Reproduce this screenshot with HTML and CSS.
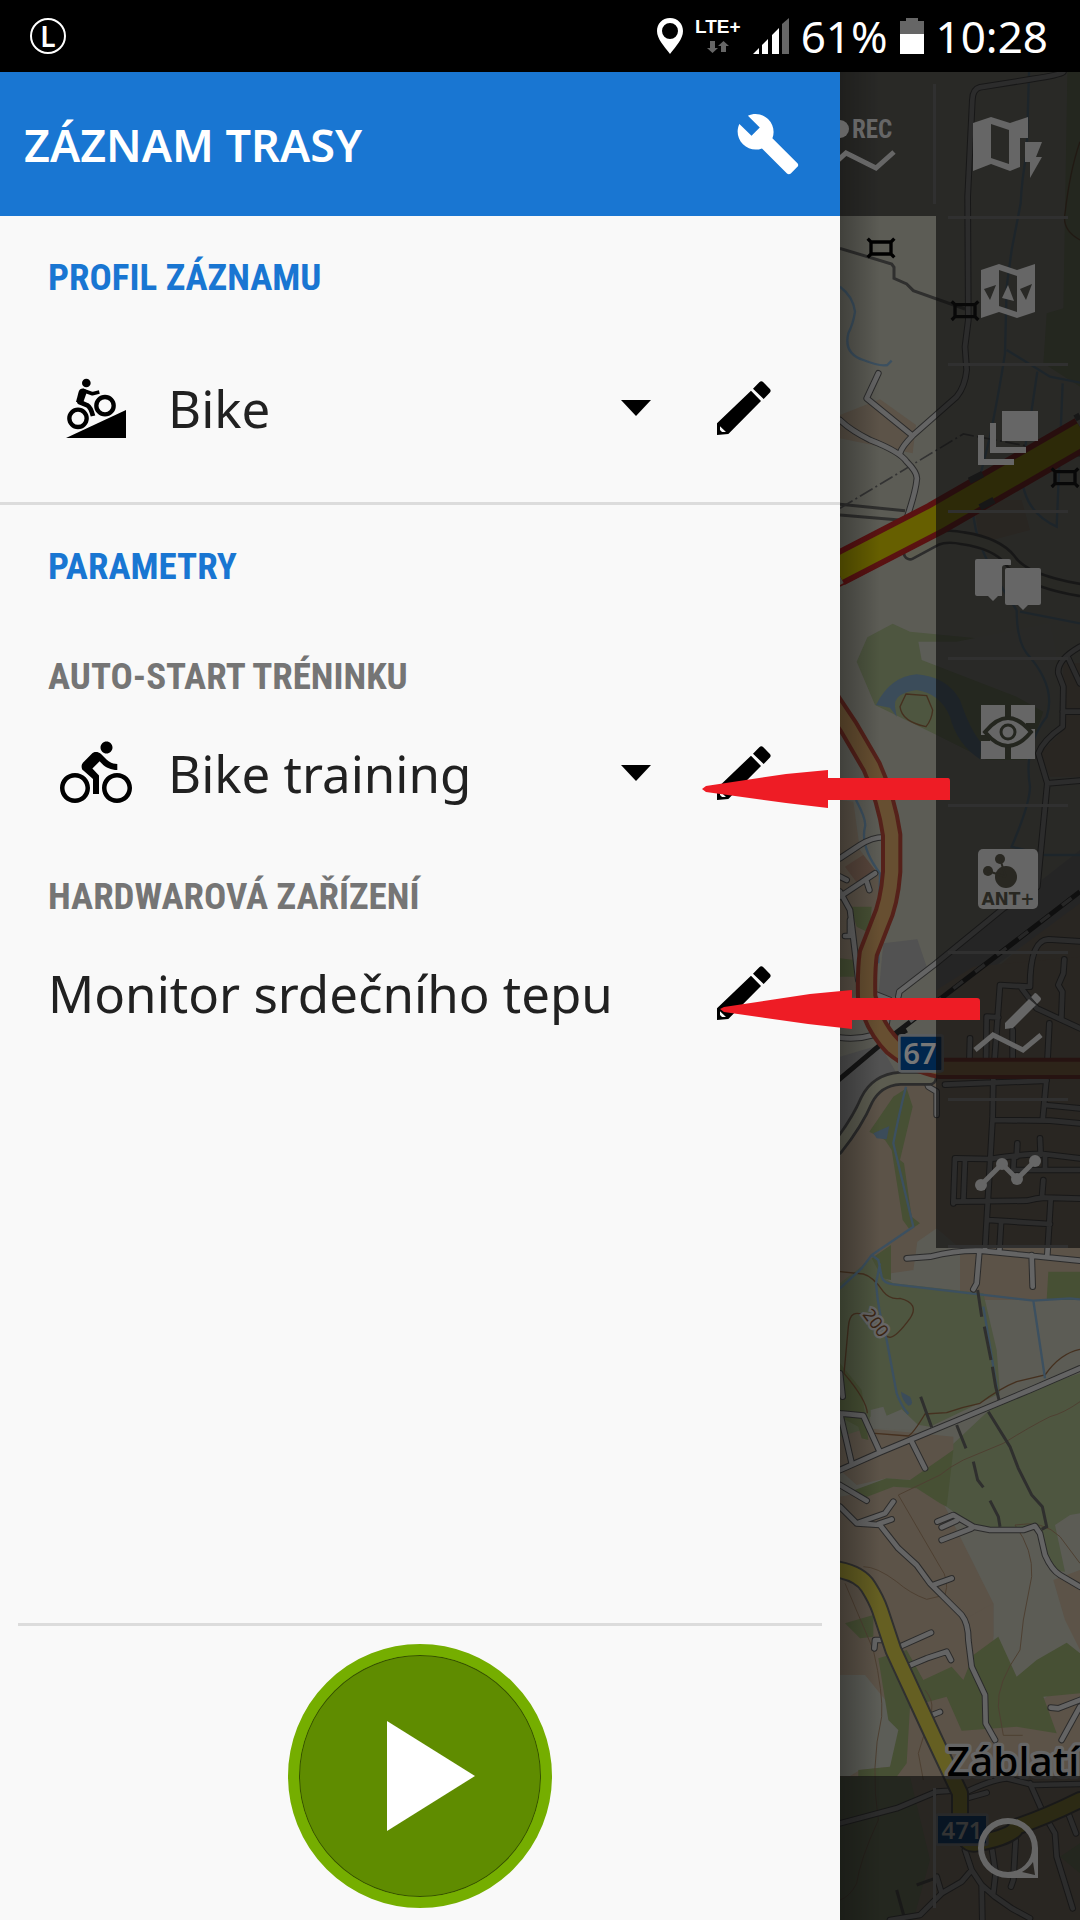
FILE: index.html
```
<!DOCTYPE html>
<html lang="cs">
<head>
    <meta charset="UTF-8">
    <meta name="viewport" content="width=device-width, initial-scale=1">
    <title>Záznam trasy</title>
    <link rel="stylesheet" href="styles.css">
</head>
<body>

<svg class="defs" aria-hidden="true">
    <symbol id="pencil" viewBox="348 60 288 288">
        <path fill-rule="evenodd" d="M513 152L543 183L445 282L411 285V250ZM420 259V270L426 276H438Z"/>
        <path d="M519 146L538 127Q544 121 550 127L569 146Q575 152 569 158L551 177Z"/>
    </symbol>
    <symbol id="caret" viewBox="0 0 30 16"><path d="M0 0H30L15 16Z"/></symbol>
</svg>

<div class="screen">
    <header class="status-bar">
        <span class="status-app">L</span>
        <svg class="pin" viewBox="0 0 26 36"><path fill-rule="evenodd" d="M13 0C5 0 0 6 0 13C0 21 7 28 13 36C19 28 26 21 26 13C26 6 21 0 13 0ZM13 5A8 8 0 1 1 13 21A8 8 0 1 1 13 5Z"/></svg>
        <span class="network">
            <span>LTE+</span>
            <svg viewBox="0 0 22 14"><path d="M3 1H8V8H11L5.500 13L0 8H3ZM14 12H19V6H22L16.500 1L11 6H14Z"/></svg>
        </span>
        <svg class="signal" viewBox="0 0 36 36">
            <path fill="#fff" d="M0 36L6 30V36ZM9 36V27L15 21V36ZM19 36V17L26 10V36Z"/>
            <path fill="#666" d="M29 36V6L36 0V36Z"/>
        </svg>
        <span class="status-text">61%</span>
        <svg class="battery" viewBox="0 0 24 36">
            <path fill="#666" d="M6 0H18V3H24V16H0V3H6Z"/>
            <path fill="#fff" d="M0 16H24V36H0Z"/>
        </svg>
        <span class="status-text">10:28</span>
    </header>

    <div class="main">
        <section class="drawer">
            <div class="drawer-header">
                <h1>ZÁZNAM TRASY</h1>
                <button class="icon-button" aria-label="Nastavení">
                    <svg class="wrench" viewBox="0 0 24 24"><path d="M22.700 19l-9.100-9.100c.9-2.300.4-5-1.500-6.900-2-2-5-2.400-7.400-1.300L9 6 6 9 1.600 4.700C.4 7.100.9 10.100 2.900 12.100c1.900 1.900 4.600 2.400 6.900 1.500l9.100 9.100c.4.4 1 .4 1.400 0l2.300-2.300c.5-.4.5-1.100.1-1.400z"/></svg>
                </button>
            </div>

            <div class="section profile">
                <h2 class="section-title">PROFIL ZÁZNAMU</h2>
                <div class="row">
                    <svg class="row-icon" viewBox="144 420 288 288">
                        <circle cx="259" cy="489" r="13"/>
                        <g fill="none" stroke="#000">
                            <circle cx="234" cy="595" r="26" stroke-width="13"/>
                            <circle cx="315" cy="557" r="26" stroke-width="13"/>
                            <path d="M249 516L238 546L262 556Q272 562 279 588" stroke-width="14" stroke-linejoin="round"/>
                            <path d="M248 511L277 521L298 516" stroke-width="11" stroke-linejoin="round"/>
                        </g>
                        <path d="M236 515Q240 504 252 506L262 512L250 546H228Z"/>
                        <path d="M198 654L378 570V654Z"/>
                    </svg>
                    <div class="picker">
                        <select aria-label="Profil záznamu"><option>Bike</option></select>
                        <svg class="caret"><use href="#caret"/></svg>
                    </div>
                    <button class="icon-button" aria-label="Upravit profil"><svg><use href="#pencil"/></svg></button>
                </div>
            </div>

            <div class="section params">
                <h2 class="section-title">PARAMETRY</h2>
                <h3 class="param-title">AUTO-START TRÉNINKU</h3>
                <div class="row">
                    <svg class="row-icon" viewBox="-4 -4 32 32"><path d="M15.500 5.500c1.100 0 2-.9 2-2s-.9-2-2-2-2 .9-2 2 .9 2 2 2zM5 12c-2.800 0-5 2.200-5 5s2.200 5 5 5 5-2.200 5-5-2.200-5-5-5zm0 8.500c-1.900 0-3.500-1.600-3.500-3.500s1.600-3.500 3.500-3.500 3.500 1.600 3.500 3.500-1.600 3.500-3.500 3.500zm5.800-10l2.400-2.400.8.8c1.300 1.300 3 2.100 5.100 2.100V9c-1.500 0-2.700-.6-3.600-1.500l-1.900-1.900c-.5-.4-1-.6-1.600-.6s-1.100.2-1.400.6L7.800 8.400c-.4.4-.6.9-.6 1.400 0 .6.2 1.100.6 1.400L11 14v5h2v-6.200l-2.200-2.300zM19 12c-2.800 0-5 2.200-5 5s2.200 5 5 5 5-2.200 5-5-2.200-5-5-5zm0 8.500c-1.900 0-3.500-1.600-3.500-3.500s1.600-3.500 3.500-3.500 3.500 1.600 3.500 3.500-1.600 3.500-3.500 3.500z"/></svg>
                    <div class="picker">
                        <select aria-label="Auto-start tréninku"><option>Bike training</option></select>
                        <svg class="caret"><use href="#caret"/></svg>
                    </div>
                    <button class="icon-button" aria-label="Upravit trénink"><svg><use href="#pencil"/></svg></button>
                    <svg class="arrow arrow-training" viewBox="0 0 248 38"><path d="M0 19L4 16L84 4L126 0V8H246Q248 8 248 11V30H126V38L84 33L4 22Z"/></svg>
                </div>
                <h3 class="param-title">HARDWAROVÁ ZAŘÍZENÍ</h3>
                <div class="row">
                    <span class="row-text">Monitor srdečního tepu</span>
                    <button class="icon-button" aria-label="Upravit monitor tepu"><svg><use href="#pencil"/></svg></button>
                    <svg class="arrow arrow-monitor" viewBox="0 0 260 39"><path d="M0 19L4 17L90 4L132 0V8H257Q260 8 260 11V30H132V39L88 34L4 22Z"/></svg>
                </div>
            </div>

            <div class="start">
                <button class="play" aria-label="Spustit záznam">
                    <svg viewBox="0 0 88 110"><path d="M0 0L88 55L0 110Z"/></svg>
                </button>
            </div>
        </section>

        <aside class="map-side">
            <!-- map, three units per pixel -->
            <svg class="map" viewBox="30 6 720 5544" preserveAspectRatio="xMinYMin slice">
                <defs>
                    <symbol id="bunker" viewBox="0 0 84 64" overflow="visible">
                        <path d="M12 14H72V50H12ZM2 4L12 14M82 4L72 14M2 60L12 50M82 60L72 50" fill="none" stroke="#000" stroke-width="10"/>
                    </symbol>
                    <g id="streets">
                        <path d="M700 6Q690 15 600 28L450 52Q428 58 427 90L413 380L415 750L405 830L410 900Q405 950 380 980L250 1095Q215 1130 210 1150M145 910L110 985L245 1095M30 1050Q60 1080 120 1110Q210 1145 230 1175Q265 1210 260 1230Q258 1260 232 1340"/>
                        <path transform="translate(0 1380)" d="M30 985L90 945Q130 920 165 922M30 1100L135 1030M108 1048L118 1080M30 1085L60 1140L85 1350M45 1218H60V1170M30 1040L50 1050M205 1400L208 1385L318 1300L520 1135L622 1070L652 760L625 670Q640 630 698 590L700 470L685 430Q680 390 750 350M652 760L750 752M715 385L750 460M698 545H750"/>
                        <path transform="translate(0 2580)" d="M30 323Q80 330 130 315M130 190L180 210L170 280M230 985L300 980Q380 960 450 962L750 992M448 965L440 1060L430 1078M605 975L608 1070M345 464L490 458L650 452M490 440L488 560L465 960M658 280L650 440L638 570M488 570L660 572L750 580M645 525L750 535M370 820L375 685L480 687Q600 670 640 672L750 685M405 690L400 815M370 815L590 812Q620 805 645 803L750 806M475 870L660 882M513 880L508 965M662 810L652 975M630 625L632 675M562 640L560 680M552 680L550 720L750 720M645 680V715M640 750L636 800M420 325L418 400M600 170Q600 30 655 28L750 34M703 88L700 130L685 165L697 185L694 265M595 170L510 165L490 440M468 400L470 260L505 262M575 175L620 235L750 295M548 300V400M280 430L295 470L320 485V555"/>
                        <path transform="translate(0 3540)" d="M30 660L150 607L600 420L750 355M30 490L100 497L150 607M30 370L38 440M30 490L65 640M245 575L285 655M30 705L110 752M30 770L80 820L150 825L205 895L260 945L300 1000L350 1050L395 1095Q415 1120 415 1170L425 1250L465 1335L467 1420L495 1470M80 820L165 790L190 755M145 822L185 808M310 1005L365 985M322 815L370 795L430 830L480 840H580L615 828L630 850L645 915Q665 960 690 975L750 1010M335 832L380 812M335 870L425 835"/>
                        <path transform="translate(0 4470)" d="M205 262L303 218M235 318L290 295L350 275L363 300M133 265L135 240H170M295 470L330 456M662 443L685 445L750 420M695 540L750 440M30 790L200 745L320 695L400 690M400 700Q480 660 530 655L610 675L750 672M600 670L640 760L675 820L680 890L728 1045M410 715L470 698M405 870L425 930L455 975L495 1010L545 1045L600 1075M425 930L395 965L335 1000L270 1065L180 1080M320 950L335 1000M455 975L457 1080M485 860L497 940L490 1000M557 840L550 960L543 980M715 760L738 820"/>
                    </g>
                    <g id="trunk">
                        <path transform="translate(0 1380)" d="M5 515L55 590L125 710Q170 810 185 915V1025Q178 1120 150 1180L115 1270Q108 1320 110 1400Q130 1490 190 1550Q250 1600 330 1615H750"/>
                    </g>
                    <g id="secondary">
                        <path transform="translate(0 4470)" d="M20 28Q90 40 115 80Q140 120 150 150L190 270L310 530L390 700V770Q395 860 440 850Q550 830 560 800Q650 770 750 720"/>
                    </g>
                    <g id="lanes">
                        <path transform="translate(0 1380)" d="M240 70L318 28Q350 14 400 25Q500 40 540 90Q580 150 750 180"/>
                        <path transform="translate(0 2580)" d="M20 655Q80 580 110 510Q140 450 210 445H300"/>
                    </g>
                    <linearGradient id="shade"><stop offset="0" stop-color="#000" stop-opacity=".3"/><stop offset="1" stop-color="#000" stop-opacity="0"/></linearGradient>
                </defs>

                <rect x="30" y="6" width="720" height="5544" fill="#5c5c55"/>

                <!-- land -->
                <g class="meadow">
                    <path d="M712 6H750V950L640 880L650 730L700 715Z"/>
                    <path transform="translate(0 1380)" d="M80 395L112 322L188 281L240 305L495 330L640 545L590 690H470L320 615L135 525Z"/>
                </g>
                <path class="built" d="M30 1035L150 988L258 1065L248 1150L30 1105ZM430 1290H575L600 1380L450 1420Z"/>
                <g transform="translate(0 1380)">
                    <path class="open" d="M265 335H380L660 280L680 380L640 545L560 500L275 390Z"/>
                    <path class="built" d="M30 810L70 815L90 960L150 1040L120 1400H30ZM700 400H750V740H660L630 670L700 600ZM400 1400L750 1100V1400Z"/>
                    <path class="house" d="M45 1010L100 975L135 1020L90 1070Z"/>
                    <path class="wood" d="M60 1130H125L120 1210L80 1190ZM30 1285L72 1290V1340H30Z"/>
                    <path class="industry" d="M160 1240L262 1228L290 1310L200 1400H145ZM318 1300L750 960V1120L318 1440Z"/>
                    <path class="water" d="M138 525Q180 440 260 433Q350 440 390 510Q420 600 455 640L450 688Q380 640 360 560Q330 490 260 480Q190 490 195 530L200 560L180 533Z"/>
                </g>
                <g transform="translate(0 2580)">
                    <path class="built" d="M30 680L160 440H320V180L430 110L750 80V1110H390V955L320 895L262 935L250 1020L183 1030V945L30 1100Z"/>
                    <path class="industry" d="M30 380L150 345L200 430L110 480L30 610Z"/>
                    <path class="wood" d="M190 500L230 475L248 530L210 690L222 700L245 860L270 880L240 900L218 870L185 660L165 630L118 605ZM125 985L183 945V1050L125 1040ZM655 1025H750V1110H650Z"/>
                    <path class="water" d="M130 610L178 588L170 628L140 625Z"/>
                    <path class="meadow" d="M30 1060L125 985L155 1040L190 1060L460 1090L500 1260L510 1390L300 1490L120 1460L110 1530L30 1560Z"/>
                </g>
                <g transform="translate(0 3540)">
                    <path class="meadow" d="M350 600L510 450L750 370V790L720 795L675 825L705 965L660 960L620 840L430 830L350 770Z"/>
                    <path class="built" d="M110 535L370 560V600L250 690L170 685L80 705L30 660V560ZM30 740L190 710L260 715L340 760L490 1060V1160L30 1160ZM670 990L750 960V1200L705 1110Z"/>
                    <path class="wood" d="M30 340L95 420L115 570L95 565L85 530L30 500ZM240 690L370 600L350 770L330 760L260 715L190 710L100 745L60 725L170 685Z"/>
                    <path class="open" d="M122 480L160 470L170 497L215 478L280 540L122 535Z"/>
                </g>
                <g transform="translate(0 4470)">
                    <path class="built" d="M30 180H400L490 130V350L630 425L690 380L750 280V1080H30Z"/>
                    <path class="open" d="M30 345H105L215 480L205 560L180 620L90 630L60 648H30Z"/>
                    <path class="wood" d="M45 190L130 165V230L90 235ZM145 295L230 270L280 360L365 320L400 360L430 285L505 230L560 350L620 300L710 248L750 280V400L640 410L680 520L560 500L395 512L350 410L240 440L230 610L200 650H85V630L180 620L205 510L175 480Z"/>
                    <path class="meadow" d="M30 650H240L300 900L250 1080H30ZM690 890L750 850V940Z"/>
                </g>

                <!-- contour lines -->
                <g class="contour">
                    <path d="M750 215Q720 300 705 430Q695 480 750 510"/>
                    <path transform="translate(0 1380)" d="M228 492L290 497L308 540Q305 570 288 590Q215 575 210 530Z"/>
                    <path transform="translate(0 3540)" d="M30 65L100 72Q130 80 160 125Q180 150 210 145Q270 160 240 205Q200 260 180 262L165 258M110 200Q60 170 55 230L42 370Q110 450 112 490M135 550L235 558Q250 550 285 492L350 488Q400 470 450 460Q510 415 560 395L645 375Q690 310 750 298"/>
                </g>
                <g class="contour faint">
                    <path transform="translate(0 3540)" d="M750 455Q700 490 660 500Q600 530 520 580L400 630Q360 650 330 675L205 735L330 950Q360 990 345 1035L290 1048Q240 1030 200 995Q140 950 100 950M750 940L690 860Q640 810 555 825Q610 900 605 980L580 1110L570 1200Q500 1300 505 1370L520 1456H578"/>
                    <path transform="translate(0 4470)" d="M45 70L130 270Q160 400 155 470Q120 620 145 780Q90 900 80 970Q60 1010 30 1020M285 390Q310 420 305 450L265 580L280 660"/>
                </g>

                <!-- water courses -->
                <g class="stream">
                    <path d="M597 6L590 250Q575 330 572 400L545 540L530 650L525 850Q510 950 480 1100L430 1300Q420 1420 560 1620M530 840L660 920L750 938M622 905L605 1020L575 1190Q570 1320 680 1370L698 940"/>
                    <path d="M30 650Q70 680 75 725Q70 760 55 790Q40 850 100 870Q150 890 172 885L185 872"/>
                    <path transform="translate(0 1380)" d="M560 240Q560 330 590 370Q680 470 650 560Q580 650 600 770Q600 820 545 950L640 975H750M570 245L750 280M78 810Q110 870 105 890Q90 950 150 1030L145 1300"/>
                    <path transform="translate(0 2580)" d="M228 470Q205 560 190 640L250 890L125 975L95 1015L30 1075M125 975L145 990L155 1040Q160 1060 190 1063L610 1112L720 1105L750 1108M610 1112L645 1345M150 1000L138 1060Q145 1150 170 1230L200 1390Q215 1430 235 1452M460 1130L505 1400"/>
                </g>
                <path class="water" transform="translate(0 3540)" d="M213 425L240 440Q255 465 235 467Q215 450 213 425Z"/>

                <!-- tracks -->
                <g class="track">
                    <path d="M30 535L185 582L192 592V625L230 642L250 662L405 717"/>
                    <path d="M30 1303L225 1322M30 1335L235 1352"/>
                    <path transform="translate(0 3540)" d="M443 120L455 200M463 230L483 330M487 350L497 410L507 450M272 440L305 532M380 525L408 595M430 635L443 690L460 712M480 752L505 800L510 830M475 485L540 590L565 655L605 735L637 770L650 830L635 838"/>
                    <path transform="translate(0 4470)" d="M260 975L315 955M200 990L225 1080"/>
                </g>
                <path class="power" d="M30 1315L400 1092L750 1158"/>

                <!-- roads -->
                <use href="#streets" class="street-case"/>
                <use href="#streets" class="street"/>
                <use href="#lanes" class="lane-case"/>
                <use href="#lanes" class="lane"/>
                <g transform="translate(0 2580)">
                    <path class="rail" d="M20 455L150 345L230 300M190 315L750 -115"/>
                    <path class="rail-dash" d="M240 275L750 -115"/>
                </g>
                <use href="#trunk" class="trunk-case"/>
                <use href="#trunk" class="trunk"/>
                <use href="#secondary" class="secondary-case"/>
                <use href="#secondary" class="secondary"/>
                <path class="motorway-case" d="M20 1499L318 1345L760 1090"/>
                <path class="motorway" d="M20 1499L318 1345L760 1090"/>
                <path class="motorway-edge" d="M30 1548L318 1397L400 1350"/>
                <path class="bridge" d="M418 1232L458 1212M450 1312L492 1290M735 1045L750 1037"/>

                <use href="#bunker" x="111" y="502" width="84" height="64"/>
                <use href="#bunker" x="363" y="690" width="84" height="64"/>
                <use href="#bunker" x="663" y="1191" width="84" height="64"/>

                <!-- signs and names -->
                <g class="sign">
                    <rect x="208" y="2896" width="130" height="108" rx="6"/>
                    <text x="270" y="2982" font-size="88">67</text>
                    <rect x="320" y="5234" width="152" height="90" rx="4"/>
                    <text x="396" y="5306" font-size="72">471</text>
                </g>
                <text class="height-label" transform="translate(138 3758) rotate(53)" y="19">200</text>
                <text class="town" x="350" y="5118">Záblatí</text>

                <rect x="30" y="6" width="120" height="5544" fill="url(#shade)"/>
            </svg>

            <div class="toolbars">
                <div class="top-tools">
                    <div class="record">
                        <button class="tool" aria-label="REC">
                            <svg viewBox="0 0 96 96">
                                <circle cx="0" cy="33" r="9"/>
                                <text x="12" y="42" class="rec">REC</text>
                                <path class="line" d="M-12 73L6 57L36 72L54 56"/>
                            </svg>
                        </button>
                    </div>
                    <nav class="tools">
                        <button class="tool" aria-label="Rychlá změna mapy">
                            <svg viewBox="0 0 96 96"><path fill-rule="evenodd" d="M13 27L31 21L50 27L68 21V42H60V71L50 75L31 68L13 75ZM31 28V62L49 68V34ZM65 46H82L76 61H82L70 82V66H65Z"/></svg>
                        </button>
                        <button class="tool" aria-label="Mapy">
                            <svg viewBox="0 0 96 96"><path fill-rule="evenodd" d="M21 27L39 21L57 27L75 21V69L57 75L39 69L21 75ZM39 27V63L57 69V33ZM24 46L36 42L30 57ZM60 46L72 41L66 57Z"/><path d="M42 55L48 42L54 58Z"/></svg>
                        </button>
                        <button class="tool" aria-label="Vrstvy">
                            <svg viewBox="0 0 96 96"><path d="M42 21H78V51H42ZM30 33H36V57H66V63H30ZM18 45H24V69H54V75H18Z"/></svg>
                        </button>
                        <button class="tool" aria-label="Popisky">
                            <svg viewBox="0 0 96 96"><path d="M17 22H49Q51 22 51 24V28H45Q42 28 42 31V59H38L33 64L28 59H17Q15 59 15 57V24Q15 22 17 22Z"/><path d="M47 31H79Q81 31 81 33V66Q81 68 79 68H68L63 73L58 68H47Q45 68 45 66V33Q45 31 47 31Z"/></svg>
                        </button>
                        <button class="tool" aria-label="Zobrazení">
                            <svg viewBox="0 0 96 96">
                                <path d="M21 21H75V75H21Z"/>
                                <g class="cut"><path d="M48 21V34M48 62V75M21 54H30M66 42H75" stroke-width="6"/><path d="M25 48Q48 20 71 48Q48 76 25 48Z" stroke-width="4"/><circle cx="48" cy="48" r="7" stroke-width="3"/></g>
                            </svg>
                        </button>
                        <button class="tool" aria-label="ANT+">
                            <svg viewBox="0 0 96 96">
                                <rect x="18" y="18" width="60" height="60" rx="5"/>
                                <g class="ant"><circle cx="46" cy="46" r="11"/><circle cx="40" cy="28" r="5"/><circle cx="28" cy="40" r="5"/><path d="M46 46L40 28M46 46L28 40" stroke-width="2"/><text x="48" y="74">ANT+</text></g>
                            </svg>
                        </button>
                        <button class="tool" aria-label="Kreslení trasy">
                            <svg viewBox="0 0 96 96"><path d="M69 21L76 27L53 50L45 51V45Z"/><path d="M71 19L74 16Q75 14 77 16L80 19Q82 21 80 23L77 26Z"/><path class="line" d="M15 72L33 57L63 72L81 57"/></svg>
                        </button>
                        <button class="tool" aria-label="Měření">
                            <svg viewBox="0 0 96 96"><path class="line" d="M21 60L42 39L57 54L75 36"/><circle cx="21" cy="60" r="6"/><circle cx="42" cy="39" r="6"/><circle cx="57" cy="54" r="6"/><circle cx="75" cy="36" r="6"/></svg>
                        </button>
                    </nav>
                </div>
                <div class="bottom-tools">
                    <button class="tool" aria-label="Hledat">
                        <svg viewBox="0 0 96 96"><path fill-rule="evenodd" d="M48 18A30 30 0 0 1 78 48V78H48A30 30 0 0 1 48 18ZM48 24A24 24 0 1 0 48 72A24 24 0 1 0 48 24ZM62 72L75 75L73 62Q69 68 62 72Z"/></svg>
                    </button>
                </div>
            </div>
        </aside>
    </div>
</div>

</body>
</html>
```

FILE: styles.css
```
body {
    margin: 0;
    background-color: #000;
    font-family: "Noto Sans", "Open Sans", sans-serif;
    color: #212121;
}
h1, h2, h3 {
    margin: 0;
}
button {
    padding: 0;
    border: none;
    background: none;
    cursor: pointer;
}
svg {
    display: block;
}
.defs {
    position: absolute;
    width: 0;
    height: 0;
}
.screen {
    display: flex;
    flex-direction: column;
    min-height: 100vh;
}

/* status bar */
.status-bar {
    display: flex;
    align-items: center;
    gap: 12px;
    height: 72px;
    padding: 0 32px 0 30px;
    color: #fff;
}
.status-app {
    width: 32px;
    height: 32px;
    margin-right: auto;
    border: 2px solid #fff;
    border-radius: 50%;
    font-size: 28px;
    font-weight: 600;
    line-height: 32px;
    text-align: center;
}
.pin {
    width: 26px;
    height: 36px;
    fill: #fff;
}
.network {
    display: flex;
    flex-direction: column;
    align-items: center;
    gap: 4px;
    font-family: "Liberation Sans", Arial, sans-serif;
    font-size: 19px;
    font-weight: bold;
    line-height: 18px;
}
.network svg {
    width: 22px;
    height: 14px;
    fill: #666;
}
.signal {
    width: 36px;
    height: 36px;
}
.battery {
    width: 24px;
    height: 36px;
}
.status-text {
    font-size: 44px;
    line-height: 72px;
}

/* drawer */
.main {
    display: flex;
    flex: 1;
}
.drawer {
    position: relative;
    z-index: 1;
    display: flex;
    flex: 7;
    flex-direction: column;
    min-width: 0;
    background-color: #f9f9f9;
}
.drawer-header {
    display: flex;
    align-items: center;
    justify-content: space-between;
    height: 144px;
    padding: 0 24px;
    background-color: #1976d2;
    color: #fff;
}
.drawer-header h1 {
    font-size: 45px;
    font-weight: 600;
}
.icon-button {
    display: flex;
    flex: none;
    align-items: center;
    justify-content: center;
    width: 96px;
    height: 96px;
}
.icon-button svg {
    width: 96px;
    height: 96px;
}
.icon-button .wrench {
    width: 66px;
    height: 66px;
    fill: #fff;
}
.section {
    padding: 38px 48px 0;
}
.profile {
    padding-bottom: 46px;
    border-bottom: 3px solid #dcdcdc;
}
.section-title,
.param-title {
    font-family: "Roboto Condensed", "Liberation Sans Narrow", Roboto, sans-serif;
    font-size: 37px;
    font-weight: bold;
    line-height: 48px;
}
.section-title {
    margin-bottom: 58px;
    color: #1976d2;
}
.params .section-title {
    margin-bottom: 62px;
}
.param-title {
    margin-bottom: 24px;
    color: #757575;
}
.row {
    position: relative;
    display: flex;
    align-items: center;
    gap: 24px;
    height: 96px;
}
.params .row {
    margin-bottom: 52px;
}
.row-icon {
    flex: none;
    width: 96px;
    height: 96px;
}
.picker {
    display: grid;
    flex: 1;
    align-items: center;
}
.picker select,
.picker .caret {
    grid-area: 1 / 1;
}
.picker select,
.row-text {
    font-family: inherit;
    font-size: 51px;
    line-height: 72px;
    color: #212121;
}
.picker select {
    appearance: none;
    width: 100%;
    height: 96px;
    padding: 0;
    border: none;
    background: none;
}
.caret {
    justify-self: end;
    width: 30px;
    height: 16px;
    margin-right: 21px;
    pointer-events: none;
}
.row-text {
    flex: 1;
    white-space: nowrap;
}
.arrow {
    position: absolute;
    top: 45px;
    fill: #ee1c25;
}
.arrow-training {
    left: 654px;
    width: 248px;
    height: 38px;
}
.arrow-monitor {
    left: 672px;
    width: 260px;
    height: 39px;
}
.start {
    display: flex;
    justify-content: center;
    margin: auto 18px 0;
    padding: 18px 0 12px;
    border-top: 3px solid #dcdcdc;
}
.play {
    display: flex;
    align-items: center;
    justify-content: center;
    width: 264px;
    height: 264px;
    border: 11px solid #75ae00;
    border-radius: 50%;
    background-color: #5f8c00;
    box-shadow: inset 0 0 0 1px #355000;
}
.play svg {
    width: 88px;
    height: 110px;
    margin-left: 22px;
    fill: #fff;
}

/* map and its toolbars */
.map-side {
    position: relative;
    flex: 2;
    min-width: 0;
    overflow: hidden;
}
.map {
    position: absolute;
    inset: 0;
    width: 100%;
    height: 100%;
}
.toolbars {
    position: relative;
    display: flex;
    flex-direction: column;
    justify-content: space-between;
    height: 100%;
}
.top-tools {
    display: flex;
    align-items: flex-start;
}
.record,
.tools,
.bottom-tools {
    background-color: rgba(12, 12, 12, 0.64);
}
.record {
    flex: 1;
    height: 144px;
    overflow: hidden;
    background-image: linear-gradient(#303030, #303030);
    background-position: right center;
    background-repeat: no-repeat;
    background-size: 3px 120px;
}
.record .tool {
    width: 96px;
}
.tools {
    width: 144px;
}
.tool {
    display: flex;
    align-items: center;
    justify-content: center;
    width: 144px;
    height: 144px;
}
.tool svg {
    width: 96px;
    height: 96px;
    fill: #666;
}
.tools .tool {
    height: 147px;
    padding-bottom: 3px;
    background: linear-gradient(#303030, #303030) center bottom / 120px 3px no-repeat;
}
.bottom-tools {
    display: flex;
    justify-content: flex-end;
    background-image: linear-gradient(#303030, #303030);
    background-position: right 144px center;
    background-repeat: no-repeat;
    background-size: 3px 120px;
}
.tool .line {
    fill: none;
    stroke: #666;
    stroke-width: 5;
}
.tool .cut {
    fill: none;
    stroke: #24261f;
}
.ant {
    fill: #292822;
    stroke: none;
}
.ant path {
    stroke: #292822;
}
.ant text {
    font-family: "DejaVu Sans", sans-serif;
    font-size: 17px;
    font-weight: bold;
    text-anchor: middle;
}
.rec {
    font-family: "Roboto Condensed", "Liberation Sans Narrow", Roboto, sans-serif;
    font-size: 25px;
    font-weight: bold;
}

/* map colours */
.meadow { fill: #4e5640; }
.wood { fill: #475034; }
.built { fill: #5c5348; }
.open { fill: #5c5d57; }
.industry { fill: #525252; }
.house { fill: #58463c; }
.water { fill: #3b4c5a; }
.contour {
    fill: none;
    stroke: #45301f;
    stroke-width: 4;
}
.faint {
    stroke: #4e4032;
    stroke-width: 3;
}
.stream {
    fill: none;
    stroke: #3c5060;
    stroke-width: 7;
}
.track {
    fill: none;
    stroke: #2f2f2e;
    stroke-width: 9;
}
.power {
    fill: none;
    stroke: #333;
    stroke-width: 5;
    stroke-dasharray: 44 10 6 10;
}
.street-case,
.street,
.lane-case,
.lane,
.trunk-case,
.trunk,
.secondary-case,
.secondary {
    fill: none;
    stroke-linecap: round;
    stroke-linejoin: round;
}
.street-case { stroke: #2b2b2b; stroke-width: 20; }
.street { stroke: #646464; stroke-width: 14; }
.lane-case { stroke: #2c2c2c; stroke-width: 44; }
.lane { stroke: #5c5c50; stroke-width: 28; }
.trunk-case { stroke: #55211a; stroke-width: 64; }
.trunk { stroke: #674f31; stroke-width: 40; }
.secondary-case { stroke: #303030; stroke-width: 54; }
.secondary { stroke: #655f22; stroke-width: 42; }
.rail {
    fill: none;
    stroke: #151515;
    stroke-width: 15;
}
.rail-dash {
    stroke: #555;
    stroke-width: 10;
    stroke-dasharray: 36 46;
}
.motorway-case { fill: none; stroke: #5a1212; stroke-width: 104; }
.motorway { fill: none; stroke: #665f00; stroke-width: 70; }
.motorway-edge { fill: none; stroke: #5a1212; stroke-width: 5; }
.bridge { stroke: #2b2b2b; stroke-width: 20; }
.sign rect {
    fill: #00264d;
    stroke: #5a5d60;
    stroke-width: 8;
}
.sign text {
    fill: #777;
    font-weight: 600;
    text-anchor: middle;
}
.height-label {
    fill: #3b2514;
    stroke: #666;
    stroke-width: 14;
    paint-order: stroke;
    font-size: 52px;
    text-anchor: middle;
}
.town {
    fill: #000;
    stroke: #666;
    stroke-width: 20;
    stroke-linejoin: round;
    paint-order: stroke;
    font-size: 122px;
    font-weight: 500;
}
```
